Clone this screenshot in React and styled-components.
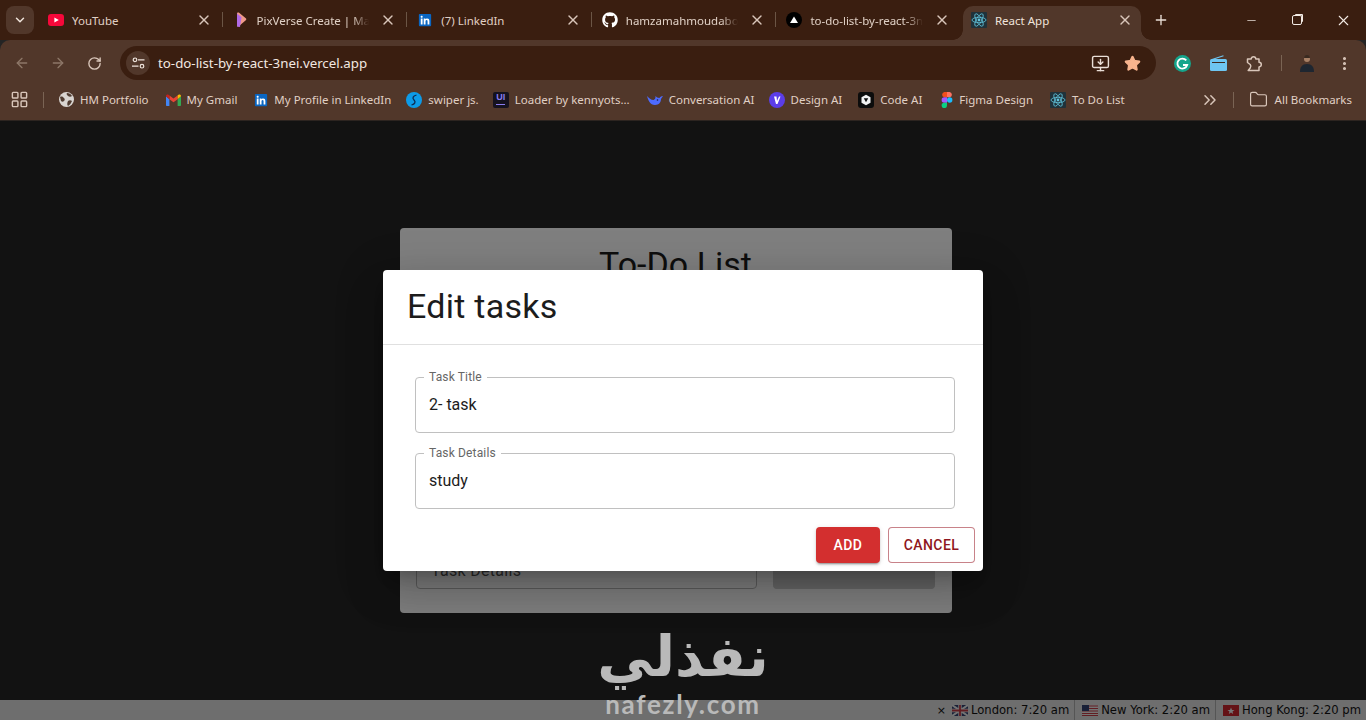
import React from 'react';
import styled, { createGlobalStyle } from 'styled-components';
import {
  ArrowLeft, ArrowRight, ChevronDown, ChevronsRight, EllipsisVertical, Folder, LayoutGrid,
  Minus, MonitorDown, Plus, RotateCw, Star, X,
} from 'lucide-react';
import { FaGithub, FaLinkedin } from 'react-icons/fa';

const chromeDark = '#3a1e10';
const chromeLight = '#51372a';
const chromeText = '#e0d0c5';
const chromeIcon = '#d9c6ba';

const GlobalStyle = createGlobalStyle`
  html, body { margin: 0; padding: 0; height: 100%; overflow: hidden; }
  body { font-family: "Noto Sans", "Open Sans", sans-serif; background: #242424; }
  * { box-sizing: border-box; }
  svg { flex-shrink: 0; }
`;

const Screen = styled.div`
  display: flex;
  flex-direction: column;
  width: 1366px;
  height: 720px;
  overflow: hidden;
  position: relative;
`;

// Browser chrome

const TabStrip = styled.div`
  display: flex;
  align-items: flex-end;
  flex: 0 0 40px;
  padding-left: 6px;
  background: ${chromeDark};
`;

const TabSearch = styled.div`
  display: flex;
  align-items: center;
  justify-content: center;
  flex: 0 0 28px;
  height: 28px;
  margin: 0 4px 6px 0;
  border-radius: 8px;
  background: ${chromeLight};
  color: #f0e4dc;
`;

const Tab = styled.div`
  display: flex;
  align-items: center;
  flex: 0 0 183.6px;
  min-width: 0;
  height: 40px;
  padding: 0 10px;
  color: ${chromeText};
  font-size: 11.5px;
`;

const ActiveTab = styled(Tab)`
  flex: 0 0 178px;
  height: 34px;
  margin-left: 3px;
  padding: 0 8px 6px;
  position: relative;
  border-radius: 10px 10px 0 0;
  background: ${chromeLight};
  color: #f0e4dc;

  &::before,
  &::after {
    content: '';
    position: absolute;
    bottom: 0;
    width: 10px;
    height: 10px;
  }
  &::before {
    left: -10px;
    background: radial-gradient(circle at 0 0, transparent 9.5px, ${chromeLight} 10px);
  }
  &::after {
    right: -10px;
    background: radial-gradient(circle at 100% 0, transparent 9.5px, ${chromeLight} 10px);
  }
`;

const TabDivider = styled.span`
  flex: 0 0 1px;
  height: 15px;
  margin-bottom: 13px;
  background: #6b5545;
`;

const TabIcon = styled.span`
  display: flex;
  align-items: center;
  justify-content: center;
  flex: 0 0 16px;
  height: 16px;
`;

const TabTitle = styled.span`
  flex: 1;
  min-width: 0;
  margin-left: 8px;
  white-space: nowrap;
  -webkit-mask-image: ${({ $fade }) => ($fade ? 'linear-gradient(to right, #000 85%, transparent 100%)' : 'none')};
  mask-image: ${({ $fade }) => ($fade ? 'linear-gradient(to right, #000 85%, transparent 100%)' : 'none')};
`;

const TabClose = styled(X)`
  width: 16px;
  height: 16px;
  margin-left: 11px;
  color: ${chromeIcon};
`;

const NewTab = styled.div`
  display: flex;
  align-items: center;
  justify-content: center;
  flex: 0 0 20px;
  height: 40px;
  margin-left: 10px;
  color: #eadfd7;
`;

const WindowControls = styled.div`
  display: flex;
  margin-left: auto;
  color: #f3ebe5;
`;

const WindowButton = styled.div`
  display: flex;
  align-items: center;
  justify-content: center;
  flex: 0 0 46px;
  height: 40px;
`;

const RestoreIcon = styled.span`
  display: block;
  width: 10px;
  height: 10px;
  border: 1px solid #f3ebe5;
  border-radius: 2px;
  box-shadow: 2px -2px 0 -1px #f3ebe5;
`;

const Toolbar = styled.div`
  display: flex;
  align-items: flex-end;
  flex: 0 0 40px;
  padding-left: 4px;
  background: ${chromeLight};
  border-radius: 10px 10px 0 0;
`;

const NavButton = styled.div`
  display: flex;
  align-items: center;
  justify-content: center;
  flex: 0 0 36px;
  height: 34px;
  color: ${({ $off }) => ($off ? '#8d7768' : chromeIcon)};
`;

const Omnibox = styled.div`
  display: flex;
  align-items: center;
  flex: 0 0 1036px;
  height: 34px;
  margin-left: 8px;
  padding: 0 15px 0 6px;
  border-radius: 17px;
  background: ${chromeDark};
`;

const SiteChip = styled.div`
  display: flex;
  align-items: center;
  justify-content: center;
  flex: 0 0 24px;
  height: 24px;
  border-radius: 50%;
  background: ${chromeLight};
`;

const Url = styled.span`
  flex: 1;
  margin-left: 8px;
  color: #f2e8e1;
  font-size: 13.3px;
`;

const OmniActions = styled.div`
  display: flex;
  align-items: center;
  gap: 14px;
  color: #eadfd7;
`;

const ExtensionRow = styled.div`
  display: flex;
  align-items: center;
  height: 34px;
  margin-left: 8px;
  color: ${chromeIcon};
`;

const ExtensionSlot = styled.div`
  display: flex;
  align-items: center;
  justify-content: center;
  flex: 0 0 ${({ $w }) => $w || 36}px;
  height: 34px;
`;

const VerticalRule = styled.span`
  flex: 0 0 1px;
  height: 16px;
  margin-left: ${({ $gap }) => $gap || 0}px;
  background: #7a6454;
`;

const BookmarksBar = styled.div`
  display: flex;
  align-items: center;
  flex: 0 0 41px;
  padding: 0 14px 1px 10px;
  background: ${chromeLight};
  border-bottom: 1px solid #2c2420;
  color: ${chromeText};
  font-size: 11.5px;
`;

const Bookmark = styled.div`
  display: flex;
  align-items: center;
  gap: 6px;
  margin-left: ${({ $gap }) => $gap}px;
  white-space: nowrap;
`;

const FolderMark = styled(Bookmark)`
  gap: 7px;
`;

const OverflowChevron = styled(ChevronsRight)`
  margin-left: auto;
  color: ${chromeIcon};
`;

// The page behind the dialog

const PageArea = styled.main`
  display: flex;
  flex-direction: column;
  flex: 1;
  min-height: 0;
  position: relative;
  font-family: Roboto, sans-serif;
`;

const Viewport = styled.div`
  display: flex;
  flex: 1;
  justify-content: center;
  padding: 107px 14px 87px 0;
  background: #242424;
`;

const TodoCard = styled.section`
  display: flex;
  flex-direction: column;
  justify-content: space-between;
  width: 552px;
  padding: 16px 17px 24px 16px;
  border-radius: 4px;
  background: #fff;
`;

const TodoTitle = styled.h1`
  margin: 0;
  color: #1c1c1c;
  font-size: 34px;
  font-weight: 400;
  line-height: 40px;
  text-align: center;
`;

const TodoRow = styled.div`
  display: flex;
  gap: 16px;
  height: 56px;
`;

const TodoInput = styled.div`
  display: flex;
  align-items: center;
  flex: 1;
  padding: 18px 14px 0;
  border: 1px solid #bbb;
  border-radius: 4px;
  color: #555;
  font-size: 16px;
  letter-spacing: 0.3px;
`;

const TodoButton = styled.div`
  flex: 0 0 162px;
  border-radius: 4px;
  background: #ccc;
`;

const StatusBar = styled.footer`
  display: flex;
  align-items: center;
  justify-content: flex-end;
  flex: 0 0 20px;
  background: #dcdcdc;
  color: #111;
  font-family: "DejaVu Sans", sans-serif;
  font-size: 11.6px;
`;

const Clock = styled.span`
  display: flex;
  align-items: center;
  gap: 3px;
  height: 100%;
  padding: 0 5px 0 7px;
  white-space: nowrap;
  & + & { border-left: 1px solid #aaa; }
`;

const Dismiss = styled.span`
  margin-right: 3px;
  font-size: 11px;
`;

// The dialog

const Backdrop = styled.div`
  display: flex;
  align-items: center;
  justify-content: center;
  position: absolute;
  inset: 0;
  background: rgba(0, 0, 0, 0.5);
`;

const Dialog = styled.div`
  display: flex;
  flex-direction: column;
  width: 600px;
  height: 301px;
  border-radius: 4px;
  background: #fff;
  box-shadow: 0 11px 15px -7px rgba(0, 0, 0, 0.2), 0 24px 38px 3px rgba(0, 0, 0, 0.14),
    0 9px 46px 8px rgba(0, 0, 0, 0.12);
`;

const DialogTitle = styled.h2`
  flex: 0 0 75px;
  margin: 0;
  padding: 16px 24px 0;
  border-bottom: 1px solid #e0e0e0;
  color: #1c1c1c;
  font-size: 34px;
  font-weight: 400;
  letter-spacing: 0.25px;
  line-height: 40px;
`;

const DialogBody = styled.div`
  display: flex;
  flex-direction: column;
  gap: 20px;
  padding: 32px 28px 0 32px;
`;

const Field = styled.div`
  position: relative;
  height: 56px;
`;

const FieldLabel = styled.label`
  position: absolute;
  top: -7px;
  left: 9px;
  padding: 0 5px;
  background: #fff;
  color: #666;
  font-size: 12px;
  letter-spacing: 0.15px;
  line-height: 14px;
`;

const FieldInput = styled.input`
  display: block;
  width: 100%;
  height: 100%;
  padding: 0 13px 2px;
  border: 1px solid #c0c0c0;
  border-radius: 4px;
  outline: none;
  background: #fff;
  color: #1c1c1c;
  font-family: Roboto, sans-serif;
  font-size: 16px;
`;

const DialogActions = styled.div`
  display: flex;
  justify-content: flex-end;
  gap: 8px;
  margin-top: 18px;
  padding-right: 8px;
`;

const ActionButton = styled.button`
  flex: 0 0 ${({ $w }) => $w}px;
  height: 36px;
  padding: 0;
  border-radius: 4px;
  font-family: Roboto, sans-serif;
  font-size: 14px;
  font-weight: 500;
  letter-spacing: 0.4px;
`;

const AddButton = styled(ActionButton)`
  border: 0;
  background: #d32f2f;
  color: #fff;
  box-shadow: 0 3px 1px -2px rgba(0, 0, 0, 0.2), 0 2px 2px rgba(0, 0, 0, 0.14), 0 1px 5px rgba(0, 0, 0, 0.12);
`;

const CancelButton = styled(ActionButton)`
  border: 1px solid rgba(155, 28, 40, 0.55);
  background: #fff;
  color: #8f1620;
`;

// Watermark

const Watermark = styled.div`
  display: flex;
  flex-direction: column;
  align-items: center;
  position: absolute;
  left: 600px;
  bottom: 0;
  width: 166px;
  color: #b9b9b9;
  pointer-events: none;
`;

const WatermarkArabic = styled.span`
  font-family: "DejaVu Sans", sans-serif;
  font-size: 56px;
  font-weight: 700;
  line-height: 62px;
  direction: rtl;
`;

const WatermarkLatin = styled.span`
  font-family: Lato, sans-serif;
  font-size: 26px;
  font-weight: 700;
  letter-spacing: 1.7px;
  line-height: 32px;
`;

// Drawn favicons and marks

const YouTubeIcon = () => (
  <svg width="16" height="12" viewBox="0 0 16 12">
    <rect width="16" height="12" rx="3" fill="#f6083a" />
    <path d="M6.4 3.4 10.8 6l-4.4 2.6z" fill="#fff" />
  </svg>
);

const PixVerseIcon = () => (
  <svg width="14" height="16" viewBox="0 0 14 16">
    <path d="M3 1.500c0-1 1-1.400 1.800-.9l7 5.600c.7.6.7 1.500 0 2.100l-7 6c-.8.6-1.800.2-1.800-.8z" fill="#ef9a8a" />
    <path d="M3 1.500 7.500 5.200 6 15 3 14.500z" fill="#b06ae6" />
  </svg>
);

const LinkedInBadge = styled.span`
  display: flex;
  flex: 0 0 14px;
  height: 14px;
  background: linear-gradient(#fff, #fff) center / 10px 10px no-repeat;
  color: #0a66c2;
`;

const LinkedInIcon = () => (
  <LinkedInBadge>
    <FaLinkedin size={14} />
  </LinkedInBadge>
);

const VercelIcon = () => (
  <svg width="16" height="16" viewBox="0 0 16 16">
    <circle cx="8" cy="8" r="8" fill="#000" />
    <path d="M8 4.400 12 11H4z" fill="#fff" />
  </svg>
);

const ReactIcon = () => (
  <svg width="16" height="16" viewBox="0 0 16 16">
    <rect width="16" height="16" rx="1" fill="#20323a" />
    <g fill="none" stroke="#61c4dc" strokeWidth=".8">
      <ellipse cx="8" cy="8" rx="7" ry="2.700" />
      <ellipse cx="8" cy="8" rx="7" ry="2.700" transform="rotate(60 8 8)" />
      <ellipse cx="8" cy="8" rx="7" ry="2.700" transform="rotate(120 8 8)" />
    </g>
    <circle cx="8" cy="8" r="1.400" fill="#61c4dc" />
  </svg>
);

const GlobeIcon = () => (
  <svg width="15" height="15" viewBox="0 0 15 15">
    <circle cx="7.500" cy="7.500" r="7.500" fill="#d8d4d0" />
    <path d="M1 5c2-1 3 0 4 1s1 2 0 3-2 1-3 0zM8 1c2 0 4 1 5 3-1 1-3 1-4 0s-2-2-1-3zM9 9c1-1 3-1 4 0-1 2-2 4-4 5-1-1-1-3 0-5z" fill="#4f3b30" />
  </svg>
);

const GmailIcon = () => (
  <svg width="15" height="12" viewBox="0 0 15 12">
    <path d="M0 2.200V11c0 .6.4 1 1 1h2.400V5.200z" fill="#4285f4" />
    <path d="M15 2.200V11c0 .6-.4 1-1 1h-2.400V5.200z" fill="#34a853" />
    <path d="M3.400 5.200 7.500 8.300l4.100-3.100V1.400L7.500 4.500 3.400 1.400z" fill="#ea4335" />
    <path d="M0 2.200c0-1.800 2.200-2.400 3.400-.8v3.800z" fill="#c5221f" />
    <path d="M15 2.200c0-1.800-2.200-2.400-3.400-.8v3.800z" fill="#fbbc04" />
  </svg>
);

const SwiperIcon = () => (
  <svg width="16" height="16" viewBox="0 0 16 16">
    <circle cx="8" cy="8" r="8" fill="#0d9be8" />
    <path d="M10.500 3C7 4 6 6 8 8s1 4-2.500 5" fill="none" stroke="#0b2c54" strokeWidth="1.300" />
  </svg>
);

const UiverseBadge = styled.span`
  display: flex;
  flex-direction: column;
  align-items: center;
  flex: 0 0 16px;
  height: 16px;
  border-radius: 2px;
  background: #15121f;
  color: #8a7cf0;
  font-family: "Liberation Sans", sans-serif;
  font-size: 9px;
  font-weight: 700;
  line-height: 11px;
  &::after {
    content: '';
    width: 9px;
    height: 1.5px;
    margin-top: 1px;
    background: #8a7cf0;
  }
`;

const WhaleIcon = () => (
  <svg width="16" height="14" viewBox="0 0 16 14">
    <path d="M0 3c1 4 3 9 8 9 4 0 6-3 6-6l2-3c-2 0-3 1-3.500 2-2 0-3-1-4-2 0 2 0 3-2 4C4 7 2 5 0 3z" fill="#4d6bfe" />
    <circle cx="10.500" cy="7" r=".8" fill="#1b1b3a" />
  </svg>
);

const VIcon = () => (
  <svg width="16" height="16" viewBox="0 0 16 16">
    <circle cx="8" cy="8" r="8" fill="#5b3de8" />
    <path d="M5 4.500h2.500L8 9l2-4.500h1.500L8.500 12H7z" fill="#fff" />
  </svg>
);

const CubeIcon = () => (
  <svg width="16" height="16" viewBox="0 0 16 16">
    <rect width="16" height="16" rx="3" fill="#0c0c0c" />
    <path d="M8 2.800 12.500 5.200v5.600L8 13.200 3.500 10.800V5.200z" fill="#f3f3f3" />
    <path d="M5.800 6.200h4.400L8 10.200z" fill="#0c0c0c" />
  </svg>
);

const FigmaIcon = () => (
  <svg width="12" height="16" viewBox="0 0 12 16">
    <path d="M6 0H3.300a2.700 2.700 0 0 0 0 5.300H6z" fill="#f24e1e" />
    <path d="M6 0h2.700a2.700 2.700 0 0 1 0 5.300H6z" fill="#ff7262" />
    <path d="M6 5.300H3.300a2.700 2.700 0 0 0 0 5.400H6z" fill="#a259ff" />
    <circle cx="8.700" cy="8" r="2.700" fill="#1abcfe" />
    <path d="M3.300 10.700H6v2.600A2.700 2.700 0 1 1 3.300 10.700z" fill="#0acf83" />
  </svg>
);

const GrammarlyIcon = () => (
  <svg width="17" height="17" viewBox="0 0 17 17">
    <circle cx="8.500" cy="8.500" r="8.500" fill="#15a58c" />
    <path d="M12.300 5.400A5 5 0 1 0 13.200 10H9" fill="none" stroke="#fff" strokeWidth="1.800" />
  </svg>
);

const RadioIcon = () => (
  <svg width="17" height="16" viewBox="0 0 17 16">
    <path d="M2 4.500 13.500.8" stroke="#6ec6f2" strokeWidth="1.200" />
    <rect y="4" width="17" height="12" rx="1.500" fill="#6ec6f2" />
    <path d="M2 7.500h13" stroke="#3d2a20" strokeWidth="1" />
  </svg>
);

const PuzzleIcon = () => (
  <svg width="17" height="17" viewBox="0 0 17 17" fill="none" stroke="currentColor" strokeWidth="1.500" strokeLinejoin="round">
    <path d="M1.500 4h3.700a2.300 2.300 0 0 1 4.600 0h3.200v3.300a2.300 2.300 0 0 1 0 4.600v3.600H2.200l2-2.500c.8-1 .8-2.500 0-3.500l-2.700-2z" />
  </svg>
);

const AvatarIcon = () => (
  <svg width="14" height="18" viewBox="0 0 14 18">
    <path d="M0 18c0-5 2-8 7-8s7 3 7 8z" fill="#1e2630" />
    <circle cx="7" cy="5" r="3" fill="#a78066" />
    <path d="M4 4c0-4 6-4 6 0z" fill="#3a2a20" />
  </svg>
);

const TuneIcon = () => (
  <svg width="13" height="12" viewBox="0 0 13 12" fill="none" stroke="#efe4dc" strokeWidth="1.200">
    <circle cx="3" cy="2.800" r="1.800" />
    <path d="M6 2.800h6.500M0 9.200h6.500" />
    <circle cx="10" cy="9.200" r="1.800" />
  </svg>
);

const FlagUK = () => (
  <svg width="16" height="11" viewBox="0 0 16 11">
    <rect width="16" height="11" fill="#33406e" />
    <path d="M0 0l16 11M16 0 0 11" stroke="#e8e8e8" strokeWidth="2" />
    <path d="M8 0v11M0 5.500h16" stroke="#e8e8e8" strokeWidth="3.400" />
    <path d="M8 0v11M0 5.500h16" stroke="#c23a44" strokeWidth="1.800" />
  </svg>
);

const FlagUS = () => (
  <svg width="16" height="11" viewBox="0 0 16 11">
    <rect width="16" height="11" fill="#e8e8e8" />
    <path d="M0 1h16M0 3.500h16M0 6h16M0 8.500h16M0 10.500h16" stroke="#c23a44" strokeWidth="1.100" />
    <rect width="7" height="6" fill="#33406e" />
  </svg>
);

const FlagHK = () => (
  <svg width="16" height="11" viewBox="0 0 16 11">
    <rect width="16" height="11" fill="#c9242c" />
    <path d="M8 2.500 9 5l2.500.1-2 1.500.7 2.400L8 7.600 5.800 9l.7-2.400-2-1.500L7 5z" fill="#eee" />
  </svg>
);

const tabs = [
  { icon: <YouTubeIcon />, title: 'YouTube' },
  { icon: <PixVerseIcon />, title: 'PixVerse Create | Mak', fade: true },
  { icon: <LinkedInIcon />, title: '(7) LinkedIn' },
  { icon: <FaGithub size={16} color="#fff" />, title: 'hamzamahmoudabo', fade: true },
  { icon: <VercelIcon />, title: 'to-do-list-by-react-3n', fade: true },
];

const bookmarks = [
  { icon: <GlobeIcon />, label: 'HM Portfolio', gap: 15 },
  { icon: <GmailIcon />, label: 'My Gmail', gap: 17 },
  { icon: <LinkedInIcon />, label: 'My Profile in LinkedIn', gap: 17 },
  { icon: <SwiperIcon />, label: 'swiper js.', gap: 15 },
  { icon: <UiverseBadge>UI</UiverseBadge>, label: 'Loader by kennyots...', gap: 14 },
  { icon: <WhaleIcon />, label: 'Conversation AI', gap: 17 },
  { icon: <VIcon />, label: 'Design AI', gap: 14 },
  { icon: <CubeIcon />, label: 'Code AI', gap: 16 },
  { icon: <FigmaIcon />, label: 'Figma Design', gap: 19 },
  { icon: <ReactIcon />, label: 'To Do List', gap: 17 },
];

const clocks = [
  { flag: <FlagUK />, text: 'London: 7:20 am', dismiss: true },
  { flag: <FlagUS />, text: 'New York: 2:20 am' },
  { flag: <FlagHK />, text: 'Hong Kong: 2:20 pm' },
];

export default function App() {
  return (
    <Screen>
      <GlobalStyle />
      <TabStrip>
        <TabSearch><ChevronDown size={14} strokeWidth={2.5} /></TabSearch>
        {tabs.map((tab, i) => (
          <React.Fragment key={tab.title}>
            <Tab>
              <TabIcon>{tab.icon}</TabIcon>
              <TabTitle $fade={tab.fade}>{tab.title}</TabTitle>
              <TabClose strokeWidth={2} />
            </Tab>
            {i < tabs.length - 1 && <TabDivider />}
          </React.Fragment>
        ))}
        <ActiveTab>
          <TabIcon><ReactIcon /></TabIcon>
          <TabTitle>React App</TabTitle>
          <TabClose strokeWidth={2} />
        </ActiveTab>
        <NewTab><Plus size={16} strokeWidth={2} /></NewTab>
        <WindowControls>
          <WindowButton><Minus size={13} strokeWidth={1.3} /></WindowButton>
          <WindowButton><RestoreIcon /></WindowButton>
          <WindowButton><X size={17} strokeWidth={1.5} /></WindowButton>
        </WindowControls>
      </TabStrip>

      <Toolbar>
        <NavButton $off><ArrowLeft size={16} /></NavButton>
        <NavButton $off><ArrowRight size={16} /></NavButton>
        <NavButton><RotateCw size={15} strokeWidth={2.2} /></NavButton>
        <Omnibox>
          <SiteChip><TuneIcon /></SiteChip>
          <Url>to-do-list-by-react-3nei.vercel.app</Url>
          <OmniActions>
            <MonitorDown size={19} strokeWidth={1.8} />
            <Star size={17} fill="#f8b48e" color="#f8b48e" />
          </OmniActions>
        </Omnibox>
        <ExtensionRow>
          <ExtensionSlot><GrammarlyIcon /></ExtensionSlot>
          <ExtensionSlot><RadioIcon /></ExtensionSlot>
          <ExtensionSlot><PuzzleIcon /></ExtensionSlot>
          <ExtensionSlot $w={18}><VerticalRule /></ExtensionSlot>
          <ExtensionSlot $w={34}><AvatarIcon /></ExtensionSlot>
          <ExtensionSlot $w={40}><EllipsisVertical size={17} strokeWidth={2.4} /></ExtensionSlot>
        </ExtensionRow>
      </Toolbar>

      <BookmarksBar>
        <LayoutGrid size={19} strokeWidth={1.8} color={chromeIcon} />
        <VerticalRule $gap={14} />
        {bookmarks.map((b) => (
          <Bookmark key={b.label} $gap={b.gap}>{b.icon}<span>{b.label}</span></Bookmark>
        ))}
        <OverflowChevron size={20} strokeWidth={1.8} />
        <VerticalRule $gap={13} />
        <FolderMark $gap={15}>
          <Folder size={19} strokeWidth={1.5} color={chromeIcon} />
          <span>All Bookmarks</span>
        </FolderMark>
      </BookmarksBar>

      <PageArea>
        <Viewport>
          <TodoCard>
            <TodoTitle>To-Do List</TodoTitle>
            <TodoRow>
              <TodoInput>Task Details</TodoInput>
              <TodoButton />
            </TodoRow>
          </TodoCard>
        </Viewport>
        <StatusBar>
          {clocks.map((c) => (
            <Clock key={c.text}>
              {c.dismiss && <Dismiss>×</Dismiss>}
              {c.flag}
              {c.text}
            </Clock>
          ))}
        </StatusBar>
        <Backdrop>
          <Dialog>
            <DialogTitle>Edit tasks</DialogTitle>
            <DialogBody>
              <Field>
                <FieldLabel>Task Title</FieldLabel>
                <FieldInput readOnly value="2- task" />
              </Field>
              <Field>
                <FieldLabel>Task Details</FieldLabel>
                <FieldInput readOnly value="study" />
              </Field>
            </DialogBody>
            <DialogActions>
              <AddButton $w={64}>ADD</AddButton>
              <CancelButton $w={87}>CANCEL</CancelButton>
            </DialogActions>
          </Dialog>
        </Backdrop>
        <Watermark>
          <WatermarkArabic>نفذلي</WatermarkArabic>
          <WatermarkLatin>nafezly.com</WatermarkLatin>
        </Watermark>
      </PageArea>
    </Screen>
  );
}
